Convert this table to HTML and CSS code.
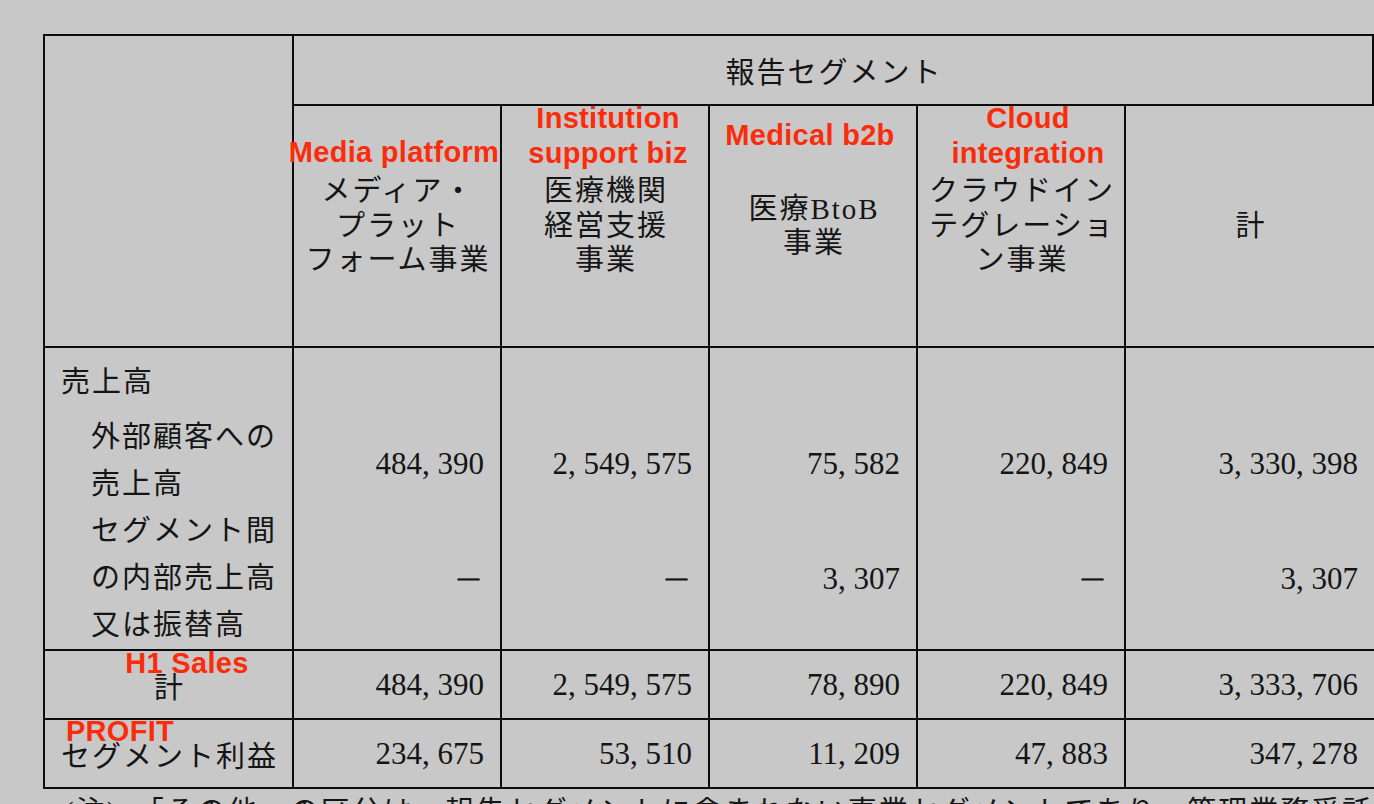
FILE: index.html
```html
<!DOCTYPE html>
<html lang="ja">
<head>
<meta charset="utf-8">
<title>セグメント情報</title>
<link rel="stylesheet" href="styles.css">
</head>
<body>
<div class="page">
  <div class="sheet">
    <div class="grid">
      <div class="cell corner"></div>
      <div class="cell seg-title">報告セグメント</div>

      <div class="cell head">メディア・<br>プラット<br>フォーム事業</div>
      <div class="cell head">医療機関<br>経営支援<br>事業</div>
      <div class="cell head">医療BtoB<br>事業</div>
      <div class="cell head">クラウドイン<br>テグレーショ<br>ン事業</div>
      <div class="cell head">計</div>

      <div class="cell item">
        <div class="line first">売上高</div>
        <div class="line sub">外部顧客への</div>
        <div class="line sub">売上高</div>
        <div class="line sub">セグメント間</div>
        <div class="line sub">の内部売上高</div>
        <div class="line sub">又は振替高</div>
      </div>
      <div class="cell num multi"><div class="b1">484<span class="c">,</span>390</div><div class="b2"><span class="dash">―</span></div></div>
      <div class="cell num multi"><div class="b1">2<span class="c">,</span>549<span class="c">,</span>575</div><div class="b2"><span class="dash">―</span></div></div>
      <div class="cell num multi"><div class="b1">75<span class="c">,</span>582</div><div class="b2">3<span class="c">,</span>307</div></div>
      <div class="cell num multi"><div class="b1">220<span class="c">,</span>849</div><div class="b2"><span class="dash">―</span></div></div>
      <div class="cell num multi"><div class="b1">3<span class="c">,</span>330<span class="c">,</span>398</div><div class="b2">3<span class="c">,</span>307</div></div>

      <div class="cell item center">計</div>
      <div class="cell num single">484<span class="c">,</span>390</div>
      <div class="cell num single">2<span class="c">,</span>549<span class="c">,</span>575</div>
      <div class="cell num single">78<span class="c">,</span>890</div>
      <div class="cell num single">220<span class="c">,</span>849</div>
      <div class="cell num single">3<span class="c">,</span>333<span class="c">,</span>706</div>

      <div class="cell item plain">セグメント利益</div>
      <div class="cell num single">234<span class="c">,</span>675</div>
      <div class="cell num single">53<span class="c">,</span>510</div>
      <div class="cell num single">11<span class="c">,</span>209</div>
      <div class="cell num single">47<span class="c">,</span>883</div>
      <div class="cell num single">347<span class="c">,</span>278</div>
    </div>
    <p class="note">(注)　「その他」の区分は、報告セグメントに含まれない事業セグメントであり、管理業務受託事業等を含んでおります。</p>
  </div>

  <div class="annotations">
    <div class="tag t-media">Media platform</div>
    <div class="tag t-inst">Institution<br>support biz</div>
    <div class="tag t-med">Medical b2b</div>
    <div class="tag t-cloud">Cloud<br>integration</div>
    <div class="tag t-h1">H1 Sales</div>
    <div class="tag t-profit">PROFIT</div>
  </div>
</div>
</body>
</html>
```

FILE: styles.css
```css
html, body {
  margin: 0;
  padding: 0;
  background: #c8c8c8;
}

body {
  overflow: hidden;
}

.page {
  position: relative;
  width: 1374px;
  height: 804px;
  overflow: hidden;
  background: #c8c8c8;
  color: #151515;
  font-family: "Liberation Serif", "Noto Sans CJK JP", serif;
}

.sheet {
  padding: 34px 0 0 43px;
}

.grid {
  display: grid;
  width: max-content;
  grid-template-columns: 247px 206px 206px 206px 206px 248px;
  grid-template-rows: 68px 240px 301px 67px 67px;
  gap: 2px;
  padding: 2px;
  background: #0c0c0c;
}

.cell {
  background: #c8c8c8;
  font-size: 29px;
  letter-spacing: 2px;
  white-space: nowrap;
}

.corner {
  grid-row: 1 / 3;
  grid-column: 1;
}

.seg-title {
  grid-column: 2 / 7;
  display: flex;
  align-items: center;
  justify-content: center;
  border-right: 2px solid #0c0c0c;
  padding-left: 2px;
}

.head {
  display: flex;
  align-items: center;
  justify-content: center;
  text-align: center;
  line-height: 34.5px;
  padding-left: 2px;
}

.item {
  padding: 11px 0 0 16px;
}

.item .line {
  line-height: 47px;
  height: 47px;
}

.item .line.first {
  margin-bottom: 8px;
}

.item .line.sub {
  padding-left: 30px;
}

.item.center {
  padding: 0 0 0 2px;
  display: flex;
  align-items: center;
  justify-content: center;
}

.item.plain {
  padding: 0 0 0 16px;
  display: flex;
  align-items: center;
}

.num {
  font-size: 31px;
  letter-spacing: 0;
  text-align: right;
  padding-right: 16px;
}

.num .c {
  letter-spacing: 0.25em;
}

.num.multi {
  padding-top: 66px;
}

.num.multi .b1 {
  height: 99px;
  line-height: 99px;
}

.num.multi .b2 {
  height: 131px;
  line-height: 131px;
}

.num.single {
  display: flex;
  align-items: center;
  justify-content: flex-end;
}

.dash {
  font-family: "Noto Sans CJK JP", sans-serif;
  font-weight: bold;
  font-size: 25px;
  margin-right: 3px;
  -webkit-text-stroke: 0.9px #151515;
}

.note {
  margin: 8px 0 0 0;
  padding-left: 21px;
  font-size: 29px;
  letter-spacing: 2px;
  line-height: 30px;
  white-space: nowrap;
}

.annotations {
  position: absolute;
  left: 0;
  top: 0;
  width: 1374px;
  height: 804px;
  pointer-events: none;
}

.tag {
  position: absolute;
  width: 240px;
  text-align: center;
  font-family: "Liberation Sans", Arial, sans-serif;
  font-weight: bold;
  font-size: 29px;
  letter-spacing: 0.3px;
  line-height: 34.5px;
  color: #fb2c0c;
  white-space: nowrap;
}

.t-media { left: 274px; top: 135px; }
.t-inst { left: 488px; top: 101px; }
.t-med { left: 690px; top: 118px; }
.t-cloud { left: 908px; top: 101px; }
.t-h1 { left: 67px; top: 646px; }
.t-profit { left: 0; top: 714px; }
```
